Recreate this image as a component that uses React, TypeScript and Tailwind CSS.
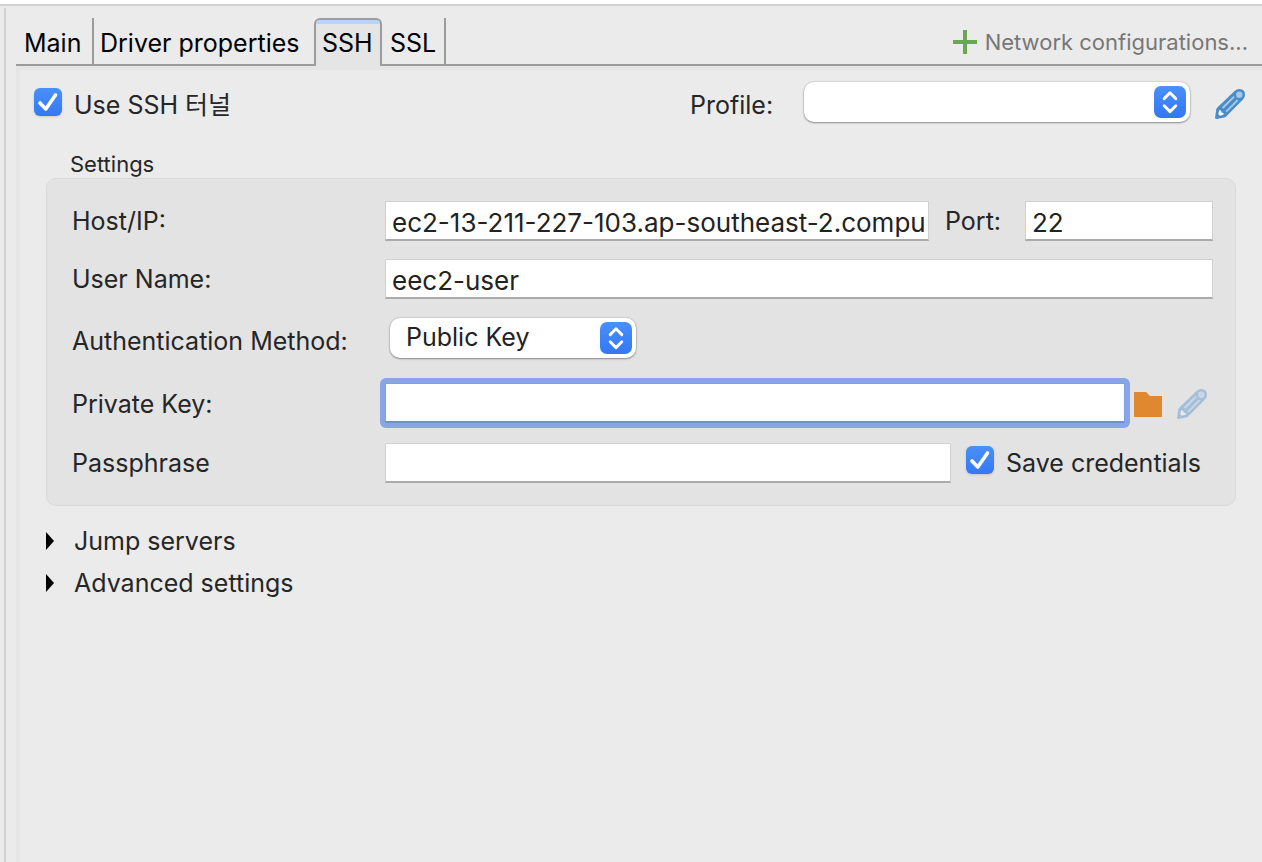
import { useState } from "react";
import type { ReactNode } from "react";

const fieldClass =
  "h-10 min-w-0 rounded-none border border-[#d0d0d0] border-b-2 border-b-[#ababab] bg-white pt-1 pl-1.5 text-[26px] text-[#222] outline-none";

function PencilIcon({ className = "" }: { className?: string }) {
  return (
    <svg className={`h-[30px] w-[30px] shrink-0 ${className}`} viewBox="0 0 30 30" aria-hidden="true">
      <path
        d="M1.6 30 Q0 30 0.1 28.4 L1.2 20.6 Q1.4 19.4 2.3 18.5 L19.6 1.9 Q21.6 0 24.4 0 Q30 0.3 30 5.8 Q30 8.4 28.2 10.3 L11.4 27.3 Q10.6 28.2 9.4 28.5 Z"
        fill="#4a8bc9"
      />
      <path d="M4.2 21.2 L6 21.6 L6.6 23.4 L8.4 24 L8.8 25.6 L4.9 26.7 L3.3 25.1 Z" fill="#f6f9fc" />
      <path d="M7.6 19 L19.1 7.6 M11.2 22.6 L22.6 11.1" stroke="#a3cae8" strokeWidth="1.9" />
      <circle cx="24.3" cy="5.7" r="3.2" fill="#a3cae8" />
    </svg>
  );
}

function Check({ id, label, className = "" }: { id: string; label: string; className?: string }) {
  return (
    <div className={`flex items-center gap-3 ${className}`}>
      <span className="relative -mt-1.5 flex h-7 w-7 shrink-0">
        <input
          id={id}
          type="checkbox"
          defaultChecked
          className="peer h-7 w-7 appearance-none rounded-md bg-white shadow-sm checked:bg-linear-to-b checked:from-[#4a90f8] checked:to-[#3478f6]"
        />
        <svg
          className="pointer-events-none absolute inset-0 hidden h-7 w-7 peer-checked:block"
          viewBox="0 0 28 28"
          fill="none"
          aria-hidden="true"
        >
          <path d="M6 15 L11.8 21 L21.5 7" stroke="white" strokeWidth="3.6" strokeLinecap="round" strokeLinejoin="round" />
        </svg>
      </span>
      <label htmlFor={id} className="whitespace-nowrap">
        {label}
      </label>
    </div>
  );
}

function Popup({ id, options, className = "" }: { id: string; options: string[]; className?: string }) {
  return (
    <div className={`relative h-10 ${className}`}>
      <select
        id={id}
        className="h-10 w-full appearance-none rounded-[10px] bg-white pr-10 pb-0.5 pl-4 text-[#222] shadow-[0_0_1px_1px_rgba(0,0,0,0.08),0_1px_2px_rgba(0,0,0,0.35)] outline-none"
      >
        {options.map((option) => (
          <option key={option}>{option}</option>
        ))}
      </select>
      <svg className="pointer-events-none absolute top-1 right-1 h-8 w-8" viewBox="0 0 32 32" fill="none" aria-hidden="true">
        <defs>
          <linearGradient id={`${id}-fill`} x1="0" y1="0" x2="0" y2="1">
            <stop offset="0" stopColor="#4a90f8" />
            <stop offset="1" stopColor="#3377f5" />
          </linearGradient>
        </defs>
        <rect width="32" height="32" rx="7" fill={`url(#${id}-fill)`} />
        <path
          d="M10.2 12.6 L16 6.8 L21.8 12.6 M10.2 19.8 L16 25.6 L21.8 19.8"
          stroke="white"
          strokeWidth="2.9"
          strokeLinecap="round"
          strokeLinejoin="round"
        />
      </svg>
    </div>
  );
}

function Row({ id, label, className = "", children }: { id: string; label: string; className?: string; children: ReactNode }) {
  return (
    <div className={`flex items-center ${className}`}>
      <label htmlFor={id} className="w-[313px] shrink-0">
        {label}
      </label>
      {children}
    </div>
  );
}

function Disclosure({ title }: { title: string }) {
  const [open, setOpen] = useState(false);
  return (
    <button
      type="button"
      aria-expanded={open}
      onClick={() => setOpen(!open)}
      className="flex h-[42px] items-center gap-5 self-start"
    >
      <svg className={open ? "h-[18px] w-2 rotate-90" : "h-[18px] w-2"} viewBox="0 0 8 18" aria-hidden="true">
        <path d="M0 0 L8 9 L0 18 Z" fill="black" />
      </svg>
      {title}
    </button>
  );
}

export default function App() {
  return (
    <div className="flex min-h-screen flex-col border-t-4 border-white bg-[#ebebeb] font-[Inter,'Noto_Sans_CJK_KR',sans-serif] text-[25px] leading-8 text-[#262626]">
      <div className="h-0.5 bg-[#d2d2d2]" />
      <div className="mt-0.5 ml-1 flex grow flex-col border-l-2 border-[#d2d2d2] pl-2.5">
        <header className="flex h-[58px] items-end pt-2.5">
          <div role="tablist" className="flex h-12 items-end text-black">
            <button type="button" role="tab" aria-selected="false" className="h-12 border-b-2 border-[#9c9c9c]">
              <span className="flex h-[46px] w-[78px] items-center border-r-2 border-[#9c9c9c] pt-1 pl-2">Main</span>
            </button>
            <button
              type="button"
              role="tab"
              aria-selected="false"
              className="flex h-12 w-[220px] items-center border-b-2 border-[#9c9c9c] pt-1 pl-1.5 whitespace-nowrap"
            >
              Driver properties
            </button>
            <button
              type="button"
              role="tab"
              aria-selected="true"
              className="h-12 w-[68px] overflow-hidden rounded-t-md border-2 border-b-0 border-[#9c9c9c] bg-[#e5e5e5]"
            >
              <span className="flex h-[46px] items-center border-t-4 border-[#b5d3fb] pb-1 pl-1.5">SSH</span>
            </button>
            <button type="button" role="tab" aria-selected="false" className="h-12 border-b-2 border-[#9c9c9c]">
              <span className="flex h-[46px] w-16 items-center border-r-2 border-[#9c9c9c] pt-1 pl-2">SSL</span>
            </button>
          </div>
          <div className="flex h-12 grow items-center justify-end border-b-2 border-[#9c9c9c] pt-0.5 pr-3.5">
            <button type="button" className="flex items-center gap-2 text-[22px] text-[#777]">
              <svg className="h-6 w-6" viewBox="0 0 24 24" aria-hidden="true">
                <path d="M12 0 V24 M0 12 H24" stroke="#68a84f" strokeWidth="4" />
              </svg>
              Network configurations...
            </button>
          </div>
        </header>

        <main className="flex grow flex-col border-t-4 border-l-4 border-[#e5e5e5] pr-4 pl-3.5">
          <div className="mt-3 mr-px flex h-10 items-center">
            <Check id="use-ssh" label="Use SSH 터널" className="mt-1.5" />
            <div className="ml-auto flex items-center">
              <label htmlFor="profile" className="mt-1.5 w-[114px]">
                Profile:
              </label>
              <Popup id="profile" options={[""]} className="w-[386px]" />
              <button type="button" aria-label="Edit profile" className="mt-1 ml-[25px]">
                <PencilIcon />
              </button>
            </div>
          </div>

          <fieldset className="mt-7 mr-2.5 ml-3">
            <legend className="pl-6 text-[22px] leading-7">Settings</legend>
            <div className="flex flex-col gap-[18px] rounded-[10px] border border-[#d9d9d9] bg-[#e3e3e3] pt-[22px] pr-[22px] pb-[22px] pl-[25px]">
              <Row id="host" label="Host/IP:">
                <input id="host" className={`${fieldClass} grow`} defaultValue="ec2-13-211-227-103.ap-southeast-2.compu" />
                <label htmlFor="port" className="w-24 shrink-0 pl-4">
                  Port:
                </label>
                <input id="port" className={`${fieldClass} w-[188px]`} defaultValue="22" />
              </Row>
              <Row id="user" label="User Name:">
                <input id="user" className={`${fieldClass} grow`} defaultValue="eec2-user" />
              </Row>
              <Row id="auth" label="Authentication Method:" className="h-12">
                <Popup id="auth" options={["Public Key", "Password", "Agent"]} className="mt-px ml-[5px] w-[246px] self-start" />
              </Row>
              <Row id="key" label="Private Key:" className="h-[42px]">
                <div className="-m-[5px] flex min-w-0 grow self-start rounded-md bg-[#89a5e8] p-[5px]">
                  <input
                    id="key"
                    className="h-10 min-w-0 grow rounded-none border border-[#7f9fe8] border-b-2 border-b-[#6d8fd4] bg-white px-1.5 outline-none"
                  />
                </div>
                <button type="button" aria-label="Browse for key file" className="ml-[9px]">
                  <svg className="h-[25px] w-7" viewBox="0 0 28 25" aria-hidden="true">
                    <path d="M0 0 H12 L16 4 H28 V25 H0 Z" fill="#e08830" />
                  </svg>
                </button>
                <button type="button" disabled aria-label="Edit key" className="mr-1.5 ml-[15px]">
                  <PencilIcon className="opacity-40" />
                </button>
              </Row>
              <Row id="pass" label="Passphrase">
                <input id="pass" type="password" className={`${fieldClass} grow`} />
                <Check id="save" label="Save credentials" className="mr-2 ml-[15px] min-w-[239px]" />
              </Row>
            </div>
          </fieldset>

          <section className="mt-3.5 ml-3 flex flex-col">
            <Disclosure title="Jump servers" />
            <Disclosure title="Advanced settings" />
          </section>
        </main>
      </div>
    </div>
  );
}
